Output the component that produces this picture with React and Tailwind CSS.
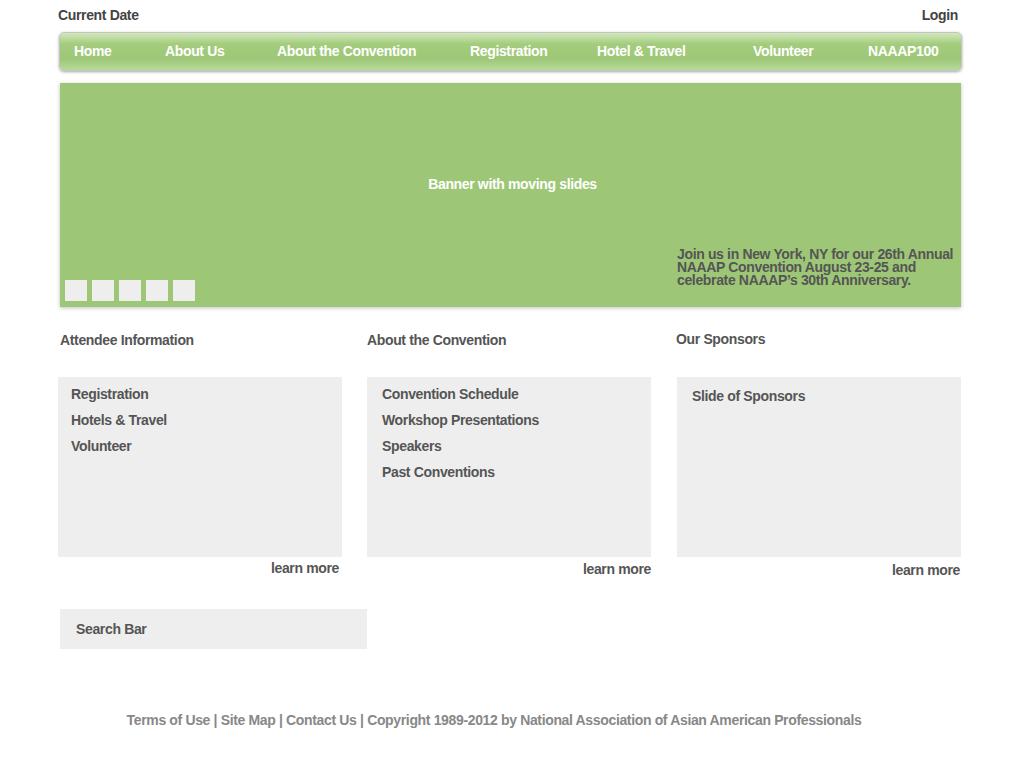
const navItems = [
  { label: 'Home', w: 'w-[91px]' },
  { label: 'About Us', w: 'w-[112px]' },
  { label: 'About the Convention', w: 'w-[193px]' },
  { label: 'Registration', w: 'w-[127px]' },
  { label: 'Hotel & Travel', w: 'w-[156px]' },
  { label: 'Volunteer', w: 'w-[115px]' },
  { label: 'NAAAP100', w: 'w-auto' },
]

const columns = [
  {
    title: 'Attendee Information',
    links: ['Registration', 'Hotels & Travel', 'Volunteer'],
    head: 'pl-[2px] h-[47px]',
    box: 'pl-[13px] pt-[8px]',
    more: 'mt-[1px] pr-[3px]',
  },
  {
    title: 'About the Convention',
    links: ['Convention Schedule', 'Workshop Presentations', 'Speakers', 'Past Conventions'],
    head: 'pl-0 h-[47px]',
    box: 'pl-[15px] pt-[8px]',
    more: 'mt-[2px] pr-0',
  },
  {
    title: 'Our Sponsors',
    links: ['Slide of Sponsors'],
    head: '-ml-[1px] -mt-[1px] h-[48px]',
    box: 'pl-[15px] pt-[10px]',
    more: 'mt-[3px] pr-[1px]',
  },
]

function InfoColumn({ title, links, head, box, more }) {
  return (
    <div className="w-[284px] flex flex-col">
      <h2 className={`text-[14px] font-bold text-[#555] ${head}`}>{title}</h2>
      <div className={`h-[180px] bg-[#eeeeee] ${box}`}>
        <ul className="flex flex-col">
          {links.map((l) => (
            <li key={l} className="h-[26px] leading-[18px] text-[14px] font-bold text-[#555]">
              {l}
            </li>
          ))}
        </ul>
      </div>
      <div className={`text-right text-[14px] font-bold text-[#555] ${more}`}>learn more</div>
    </div>
  )
}

export default function App() {
  return (
    <div className="min-h-[768px] bg-white font-['Liberation_Sans',Arial,sans-serif] tracking-[-0.35px]">
      <div className="ml-[58px] w-[904px] pt-[6px]">
        <div className="flex justify-between h-[20px] text-[14px] font-bold text-[#444] leading-[18px]">
          <span>Current Date</span>
          <span className="pr-[4px]">Login</span>
        </div>

        <nav className="mt-[6px] ml-[1px] h-[39px] rounded-[5px] border border-[#c4c4c4] shadow-[0_1px_3px_rgba(0,0,0,0.35)] bg-[linear-gradient(to_bottom,#d3e8bd_0%,#a3cc7c_30%,#9dc777_70%,#b8da9a_100%)] flex items-center pl-[14px] pr-[20px]">
          {navItems.map((n) => (
            <span key={n.label} className={`${n.w} shrink-0 text-white text-[14px] font-bold`}>
              {n.label}
            </span>
          ))}
        </nav>

        <section className="mt-[12px] ml-[2px] h-[224px] w-[901px] bg-[#9dc777] shadow-[0_1px_4px_rgba(0,0,0,0.25)] flex flex-col">
          <div className="pt-[92px] pl-[4px] text-center text-white text-[14px] leading-[18px] font-bold">
            Banner with moving slides
          </div>
          <div className="mt-auto flex justify-between items-end pb-[6px] pl-[5px] pr-[2px]">
            <div className="flex gap-[5px]">
              {[0, 1, 2, 3, 4].map((i) => (
                <span key={i} className="w-[22px] h-[21px] bg-[#eeeeee]" />
              ))}
            </div>
            <p className="w-[282px] pb-[14px] text-[14px] leading-[13px] font-bold text-[#555]">
              Join us in New York, NY for our 26th Annual NAAAP Convention August 23-25 and celebrate NAAAP’s 30th Anniversary.
            </p>
          </div>
        </section>

        <div className="mt-[23px] flex gap-[25px] items-start">
          {columns.map((c, i) => (
            <div key={c.title} className={i === 2 ? 'ml-[1px]' : ''}>
              <InfoColumn {...c} />
            </div>
          ))}
        </div>

        <div className="mt-[28px] ml-[2px] w-[307px] h-[40px] bg-[#eeeeee] flex items-center pl-[16px] text-[14px] font-bold text-[#555]">
          Search Bar
        </div>

        <footer className="mt-[61px] -ml-[58px] w-[988px] text-center text-[14px] font-bold text-[#888]">
          Terms of Use | Site Map | Contact Us | Copyright 1989-2012 by National Association of Asian American Professionals
        </footer>
      </div>
    </div>
  )
}
